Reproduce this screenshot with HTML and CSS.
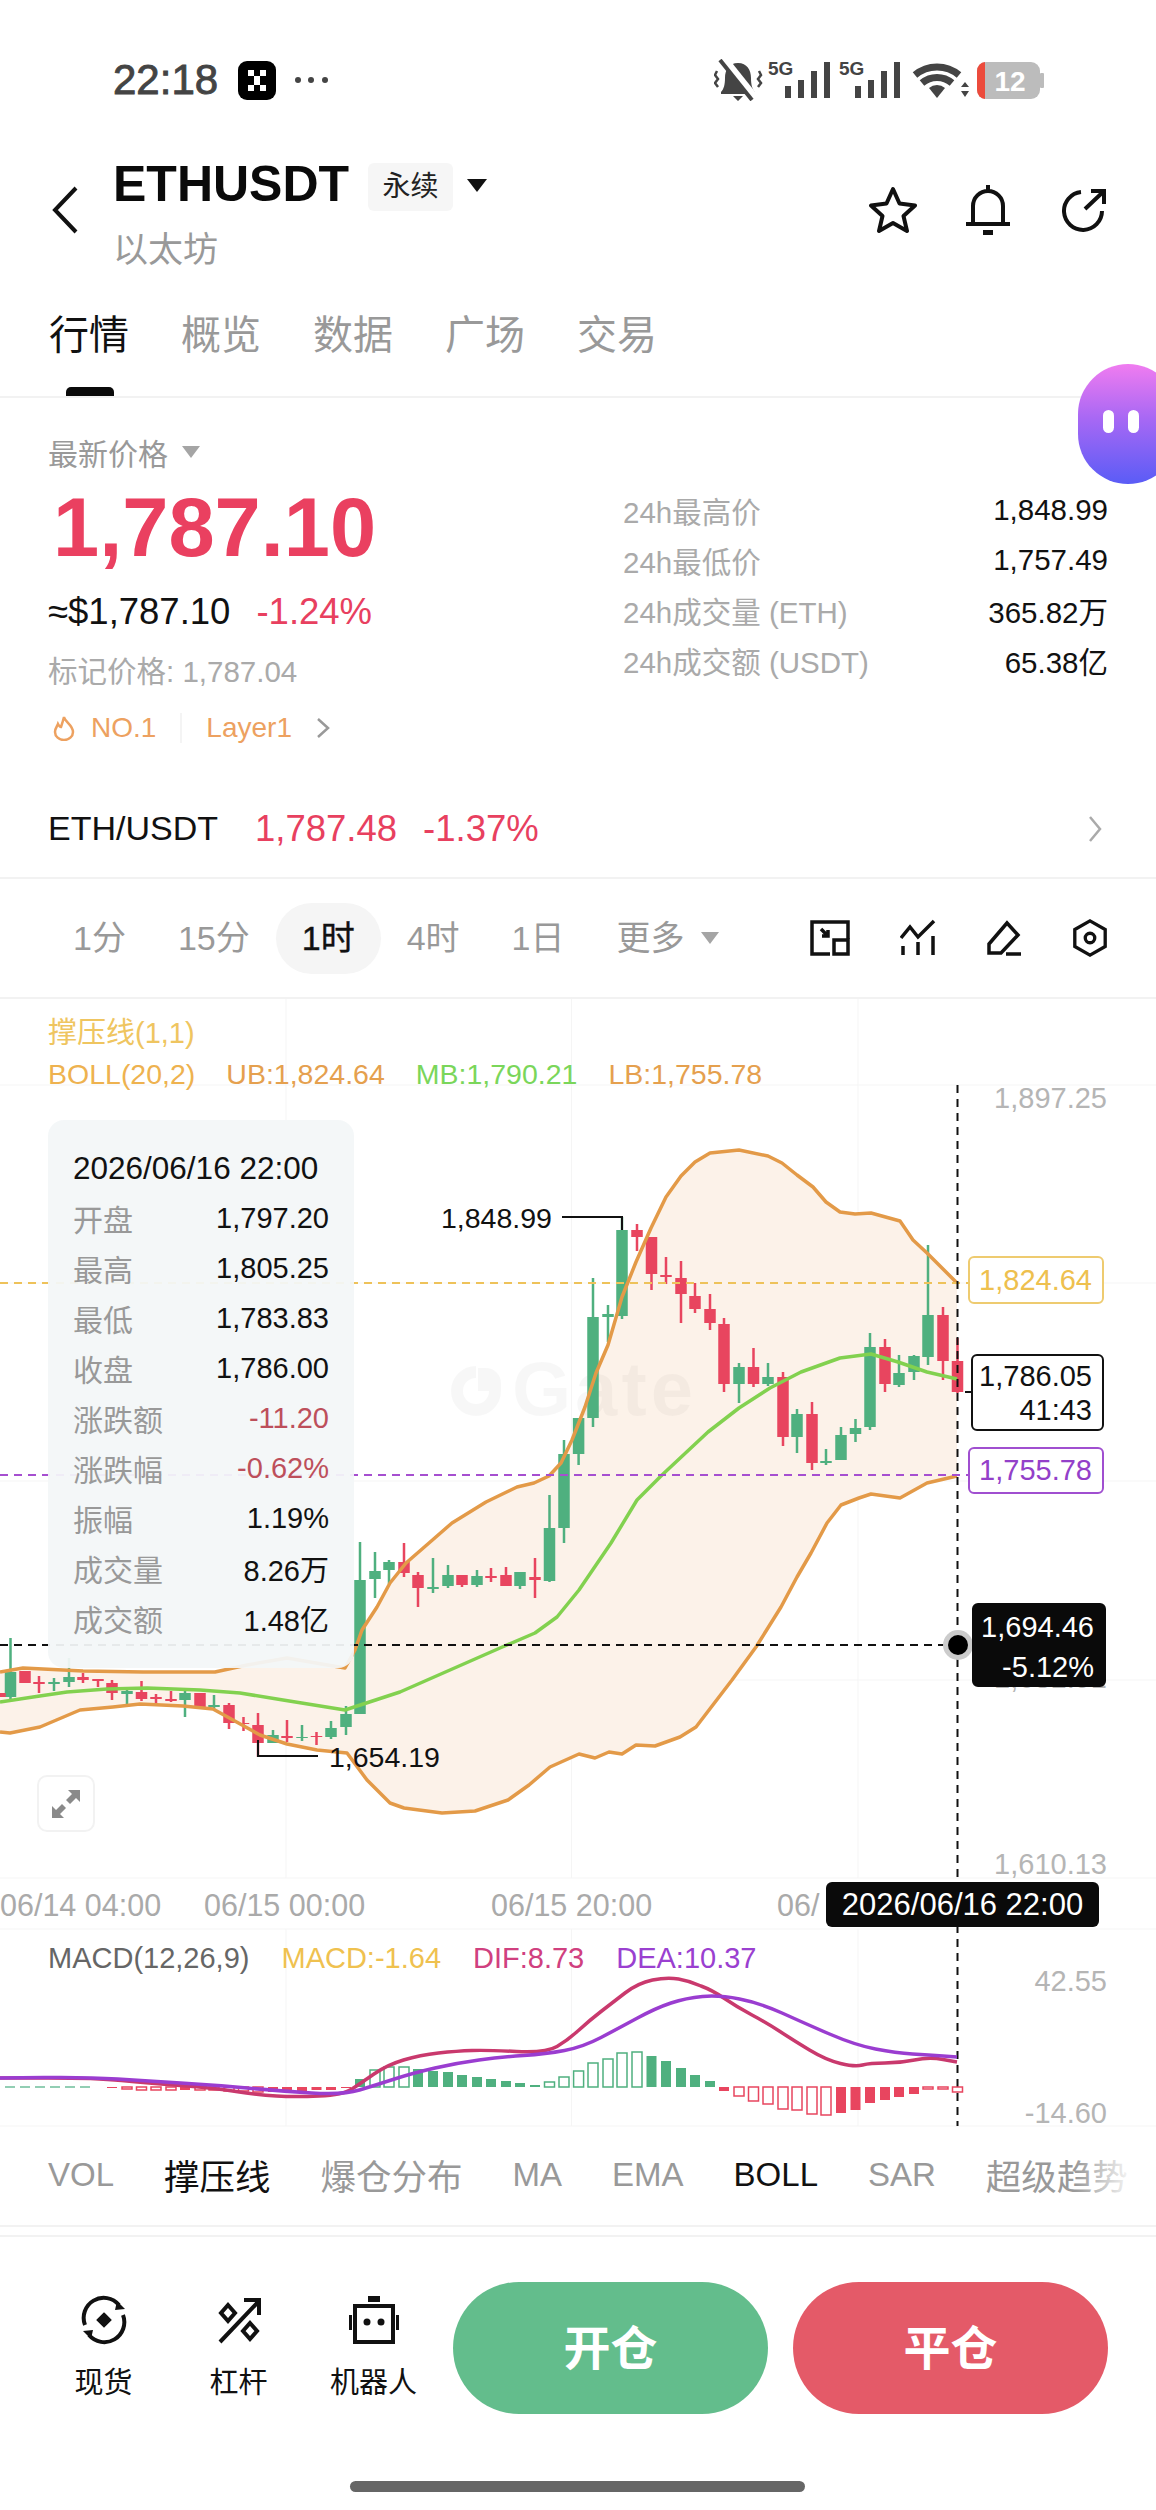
FILE: index.html
```html
<!DOCTYPE html>
<html lang="zh">
<head>
<meta charset="utf-8">
<title>ETHUSDT</title>
<link rel="stylesheet" href="styles.css">
</head>
<body>
<div class="page">

  <div class="status">
    <span class="clock">22:18</span>
    <svg class="app-icon" viewBox="0 0 38 39"><rect width="38" height="39" rx="9" fill="#000"/><path fill="#fff" d="M10 9h6v6h-6zM22 9h6v6h-6zM16 15h6v9h-6zM10 24h6v6h-6zM22 24h6v6h-6z"/></svg>
    <svg class="more-dots" viewBox="0 0 33 6"><circle cx="3" cy="3" r="3"/><circle cx="16" cy="3" r="3"/><circle cx="30" cy="3" r="3"/></svg>
    <svg class="status-right" viewBox="0 0 332 42">
      <path class="st-fill" d="M24 4c-9 0-13 7-13 15 0 6-1 11-4 14v2h34v-2c-3-3-4-8-4-14 0-8-4-15-13-15zM19 37h10l-5 5z"/>
      <path class="st-cut" d="M9 -1L41 39"/><path class="st-slash" d="M6 1L38 41"/>
      <path class="st-line" d="M3 12l-2 4 3 4-3 4 3 4M45 12l2 4-3 4 3 4-3 4"/>
      <text class="st-5g" x="54" y="16">5G</text>
      <path class="st-fill" d="M71 27h6v12h-6zM84 21h6v18h-6zM97 12h6v27h-6zM110 3h6v36h-6z"/>
      <text class="st-5g" x="125" y="16">5G</text>
      <path class="st-fill" d="M141 27h6v12h-6zM154 21h6v18h-6zM167 12h6v27h-6zM180 3h6v36h-6z"/>
      <path class="st-wifi" d="M201 16a34 34 0 0 1 44 0M208 24a23 23 0 0 1 30 0"/>
      <path class="st-fill" d="M215 29a12 12 0 0 1 16 0l-8 10z"/>
      <path class="st-fill" d="M247 28l4-5 4 5zM247 32l4 6 4-6z"/>
      <rect class="st-batt" x="263" y="3" width="63" height="37" rx="9"/>
      <rect class="st-batt" x="326" y="14" width="4" height="15" rx="1"/>
      <path class="st-red" d="M271 3a8 9 0 0 0-8 9v19a8 9 0 0 0 8 9z"/>
      <text class="st-batt-text" x="296" y="32">12</text>
    </svg>
  </div>

  <div class="hdr">
    <svg class="back" viewBox="0 0 26 48"><path d="M24 2L3 24l21 22"/></svg>
    <div class="hdr-main">
      <div class="title-row">
        <span class="symbol">ETHUSDT</span>
        <span class="badge">永续</span>
        <span class="tri tri-dark"></span>
      </div>
      <div class="sub">以太坊</div>
    </div>
    <div class="hdr-actions">
      <svg class="ic-star" viewBox="0 0 48 48"><path d="M24 3l6.500 14.500L46 19.500 34.500 30 38 45l-14-8-14 8 3.500-15L2 19.500l15.500-2z"/></svg>
      <svg class="ic-bell" viewBox="0 0 44 50"><path d="M22 0v6M7 38V21a15 15 0 0 1 30 0v17M0 39h44"/><rect x="17" y="45" width="10" height="5"/></svg>
      <svg class="ic-share" viewBox="0 0 44 44"><path d="M19 4A19 19 0 1 0 40 23M23 21L41 4M29 3h13v13"/></svg>
    </div>
  </div>

  <div class="tabs">
    <div class="tab-row">
      <span class="tab tab-on">行情</span>
      <span class="tab">概览</span>
      <span class="tab">数据</span>
      <span class="tab">广场</span>
      <span class="tab">交易</span>
    </div>
    <div class="tab-ink"></div>
  </div>

  <div class="price">
    <div class="price-left">
      <div class="latest"><span>最新价格</span><span class="tri tri-gray"></span></div>
      <div class="big">1,787.10</div>
      <div class="fiat"><span>≈$1,787.10</span><span class="down">-1.24%</span></div>
      <div class="mark">标记价格: 1,787.04</div>
      <div class="tags">
        <svg class="ic-fire" viewBox="0 0 22 26"><path d="M11 2c1 5 9 8 9 15a9 8 0 0 1-18 0c0-4 2-5 3-8 1 2 2 3 3 3 1-3 2-6 3-10z"/></svg>
        <span class="tag-no">NO.1</span>
        <span class="tag-sep"></span>
        <span>Layer1</span>
        <svg class="ic-chev" viewBox="0 0 14 20"><path d="M2 1l10 9-10 9"/></svg>
      </div>
    </div>
    <div class="stats">
      <div class="stat"><span>24h最高价</span><b>1,848.99</b></div>
      <div class="stat"><span>24h最低价</span><b>1,757.49</b></div>
      <div class="stat"><span>24h成交量 (ETH)</span><b>365.82万</b></div>
      <div class="stat"><span>24h成交额 (USDT)</span><b>65.38亿</b></div>
    </div>
  </div>

  <div class="pair">
    <span class="pair-name">ETH/USDT</span>
    <span class="down">1,787.48</span>
    <span class="down">-1.37%</span>
    <svg class="pair-chev" viewBox="0 0 14 28"><path d="M2 2l10 12-10 12"/></svg>
  </div>

  <div class="intervals">
    <span class="iv">1分</span>
    <span class="iv">15分</span>
    <span class="iv iv-on">1时</span>
    <span class="iv">4时</span>
    <span class="iv">1日</span>
    <span class="iv">更多</span>
    <span class="tri tri-gray tri-more"></span>
    <div class="iv-tools">
      <svg class="tool-a" viewBox="0 0 40 36"><path d="M20 34H2V2h36v17M11 9l7 7M18 10v6h-6"/><rect x="24" y="20" width="14" height="14"/></svg>
      <svg class="tool-b" viewBox="0 0 36 34"><path d="M1 17L10 6l8 10L34 0M3 25v9M18 21v13M33 15v19"/></svg>
      <svg class="tool-b" viewBox="0 0 36 36"><path d="M3 33v-9L21 3l11 12-17 18zM20 34h15"/></svg>
      <svg class="tool-b" viewBox="0 0 36 40"><path d="M18 2l16 9v18l-16 9-16-9V11z"/><circle cx="18" cy="20" r="5"/></svg>
    </div>
  </div>

  <div class="chart">
    <svg class="chart-svg" viewBox="0 999 1156 1128">
      <path class="grid" d="M0 1085H1156M0 1283H1156M0 1481H1156M0 1680H1156M0 1878H1156M0 1929H1156M0 2126H1156M286 999V1878M571.500 999V1878M858 999V1878M286 1929V2126M571.500 1929V2126M858 1929V2126"/>
      <path class="band-fill" d="M0 1672 23 1668 83 1671 143 1672 215 1672 247 1665 287 1658 345 1668 355 1650 362 1630 377 1607 390 1583 406 1563 429 1543 452 1523 486 1502 517 1487 534 1483 549 1476 561 1463 572 1440 585 1407 596 1373 608 1345 622 1297 636 1262 651 1228 666 1197 681 1176 695 1162 710 1153 739 1150 768 1156 782 1163 797 1175 813 1187 826 1202 840 1212 855 1214 871 1213 900 1221 913 1240 927 1253 957 1283 957 1476 927 1483 900 1498 871 1494 859 1498 841 1505 827 1523 811 1553 797 1577 781 1607 756 1647 732 1680 696 1727 680 1737 655 1746 636 1745 622 1754 609 1752 595 1758 579 1754 550 1767 529 1785 508 1800 475 1811 442 1813 404 1808 390 1803 367 1780 347 1753 317 1750 287 1744 260 1735 233 1720 213 1709 183 1706 140 1704 113 1707 80 1710 40 1727 10 1733 0 1732z"/>
      <g class="watermark">
        <path class="wm-ring" d="M476 1372a19 19 0 1 0 19 19"/>
        <path class="wm-dot" d="M478 1368h8a15 15 0 0 1 15 15v8h-23z"/>
        <text class="wm-text" x="512" y="1415">Gate</text>
      </g>
      <path class="wick-g" d="M928 1245V1365M914 1355V1380M899 1355V1387M870 1333V1430M855.500 1419V1442M841 1427V1460M826 1449V1465M797 1409V1453M768 1363V1386M739 1363V1403M622 1217V1319M608 1305V1342M593 1278V1427M578.600 1418V1465M564 1440V1543M549.500 1495V1582M520 1572V1589M477 1570V1587M448 1565V1588M433 1558V1593M389 1560V1584M375 1552V1598M360 1542V1714M346 1706V1735M331 1721V1739M302 1725V1741M273 1730V1743M214 1695V1709M185 1690V1717M127 1688V1704M69 1658V1687M54 1678V1691M10.500 1638V1700"/>
      <path class="body-g" d="M928 1315V1357M914 1356V1372M899 1373V1385M870 1347V1427M855.500 1428V1434M841 1435V1460M826 1461V1463M797 1414V1437M768 1377V1384M739 1367V1384M622 1230V1316M608 1314V1317M593 1317V1418M578.600 1418V1454M564 1454V1528M549.500 1528V1581M520 1572V1586M477 1576V1585M448 1575V1586M433 1587V1589M389 1562V1570M375 1571V1579M360 1580V1714M346 1714V1727M331 1728V1737M302 1737V1738M273 1735V1743M214 1705V1707M185 1693V1700M127 1691V1694M69 1677V1682M54 1682V1684M10.500 1672V1697"/>
      <path class="wick-r" d="M957.500 1338V1393M943 1307V1380M885 1339V1392M812 1402V1470M783 1372V1446M753.500 1348V1387M724 1318V1392M710 1294V1330M695 1283V1313M681 1261V1323M666 1257V1284M651.500 1237V1290M637 1224V1251M535 1558V1598M506 1567V1586M491 1568V1582M462 1575V1587M418 1572V1607M404 1543V1577M316.500 1732V1745M287 1720V1742M258 1713V1757M243.500 1717V1731M229 1703V1729M200 1693V1707M171 1691V1702M156 1694V1704M141.500 1681V1701M112 1680V1700M98 1679V1687M83 1673V1683M39 1676V1693M25 1671V1683"/>
      <path class="body-r" d="M957.500 1361V1392M943 1315V1361M885 1347V1384M812 1414V1463M783 1377V1437M753.500 1367V1384M724 1324V1384M710 1309V1323M695 1296V1309M681 1278V1294M666 1275V1277M651.500 1237V1274M637 1230V1237M535 1577V1580M506 1575V1586M491 1576V1578M462 1575V1585M418 1575V1588M404 1562V1573M316.500 1736V1737M287 1736V1738M258 1725V1743M243.500 1723V1724M229 1705V1723M200 1693V1707M171 1699V1701M156 1697V1699M141.500 1692V1699M112 1683V1693M98 1679V1681M83 1677V1680M39 1682V1684M25 1671V1683M0 1693V1697"/>
      <path class="boll-o" d="M0 1672 23 1668 83 1671 143 1672 215 1672 247 1665 287 1658 345 1668 355 1650 362 1630 377 1607 390 1583 406 1563 429 1543 452 1523 486 1502 517 1487 534 1483 549 1476 561 1463 572 1440 585 1407 596 1373 608 1345 622 1297 636 1262 651 1228 666 1197 681 1176 695 1162 710 1153 739 1150 768 1156 782 1163 797 1175 813 1187 826 1202 840 1212 855 1214 871 1213 900 1221 913 1240 927 1253 957 1283"/>
      <path class="boll-o" d="M0 1732 10 1733 40 1727 80 1710 113 1707 140 1704 183 1706 213 1709 233 1720 260 1735 287 1744 317 1750 347 1753 367 1780 390 1803 404 1808 442 1813 475 1811 508 1800 529 1785 550 1767 579 1754 595 1758 609 1752 622 1754 636 1745 655 1746 680 1737 696 1727 732 1680 756 1647 781 1607 797 1577 811 1553 827 1523 841 1505 859 1498 871 1494 900 1498 927 1483 957 1476"/>
      <path class="boll-g" d="M0 1702 33 1697 67 1692 107 1689 147 1688 200 1690 240 1693 283 1700 345 1710 400 1692 450 1670 500 1648 535 1633 557 1617 579 1590 611 1543 637 1500 662 1475 708 1432 739 1408 770 1388 801 1372 840 1358 871 1354 898 1362 927 1372 957 1379"/>
      <path class="dash-y" d="M0 1283H968"/>
      <path class="dash-p" d="M0 1475H968"/>
      <path class="dash-k" d="M0 1645H957M957.500 1085V2126"/>
      <path class="lead" d="M562 1217H622V1230M258 1740V1756H318M965 1392H972"/>
      <text class="ax" x="1107" y="1108">1,897.25</text>
      <text class="ax" x="1107" y="1688">1,681.91</text>
      <text class="ax" x="1107" y="1874">1,610.13</text>
      <text class="note" x="441" y="1228">1,848.99</text>
      <text class="note" x="329" y="1767">1,654.19</text>
      <text class="ax-date" x="0" y="1916">06/14 04:00</text>
      <text class="ax-date" x="204" y="1916">06/15 00:00</text>
      <text class="ax-date" x="491" y="1916">06/15 20:00</text>
      <text class="ax-date" x="777" y="1916">06/</text>
      <text class="ax" x="1107" y="1991">42.55</text>
      <text class="ax" x="1107" y="2123">-14.60</text>
      <path class="hist-rf" d="M914 2087v7M899 2087v10M885 2087v13M870 2087v16M855.500 2087v23M841 2087v26M724 2087v4M346 2087v1M331 2087v3M316.500 2087v3M302 2087v4M287 2087v3M273 2087v5M185 2087v3M112 2087v1"/>
      <path class="hist-gf" d="M710 2087v-6M695 2087v-12M681 2087v-19M666 2087v-26M651.500 2087v-31M535 2087v-2M520 2087v-4M506 2087v-6M491 2087v-8M477 2087v-10M462 2087v-12M448 2087v-15M433 2087v-16M418 2087v-18M360 2087v-8"/>
      <path class="hist-rh" d="M952.500 2087h10v5h-10zM938 2087h10v2h-10zM923 2087h10v2h-10zM821 2087h10v28h-10zM807 2087h10v27h-10zM792 2087h10v23h-10zM778 2087h10v22h-10zM763 2087h10v17h-10zM748.500 2087h10v14h-10zM734 2087h10v9h-10zM253 2087h10v5h-10zM238.500 2087h10v4h-10zM224 2087h10v4h-10zM209 2087h10v3h-10zM195 2087h10v3h-10zM166 2087h10v3h-10zM151 2087h10v3h-10zM136.500 2087h10v3h-10zM122 2087h10v2h-10z"/>
      <path class="hist-gh" d="M632 2087h10v-35h-10zM617 2087h10v-34h-10zM603 2087h10v-28h-10zM588 2087h10v-24h-10zM573.600 2087h10v-16h-10zM559 2087h10v-10h-10zM544.500 2087h10v-5h-10zM399 2087h10v-20h-10zM384 2087h10v-20h-10zM370 2087h10v-17h-10z"/>
      <path class="hist-dash" d="M5 2087H90"/>
      <path class="macd-dif" d="M0 2078L48 2078Q96 2078 121.500 2080.500Q147 2083 180.500 2085.500Q214 2088 236 2091.500Q258 2095 276.500 2096Q295 2097 319 2096Q343 2095 352 2089Q361 2083 374 2074Q387 2065 403.500 2060Q420 2055 438.500 2053Q457 2051 472 2050.500Q487 2050 516.500 2051.500Q546 2053 557 2046.500Q568 2040 579 2030Q590 2020 601 2011.500Q612 2003 625 1993Q638 1983 652.500 1980Q667 1977 678.500 1979Q690 1981 701 1986Q712 1990 724.500 1998.500Q737 2007 752 2015Q767 2023 780 2031.500Q793 2040 809.500 2050Q826 2060 840.500 2063.500Q855 2067 862.500 2065Q870 2063 885 2063Q900 2063 914.500 2060Q929 2057 943 2059.500L957 2062"/>
      <path class="macd-dea" d="M0 2078L44 2077.500Q88 2077 117.500 2079Q147 2081 180.500 2083Q214 2085 247 2088Q280 2091 311.500 2093Q343 2095 359.500 2090Q376 2085 394.500 2079Q413 2073 435 2068Q457 2063 479 2060Q501 2057 523.500 2055.500Q546 2054 564.500 2050.500Q583 2047 601 2037.500Q619 2028 637.500 2018Q656 2008 671 2003Q686 1998 702.500 1996.500Q719 1995 739.500 1999Q760 2003 782 2013Q804 2023 829.500 2034Q855 2045 875.500 2049Q896 2053 912.500 2054Q929 2055 943 2056L957 2057"/>
      <circle class="cross-halo" cx="958" cy="1645" r="15"/>
      <circle cx="958" cy="1645" r="10"/>
    </svg>

    <div class="legend">
      <div class="legend-top">撑压线(1,1)</div>
      <div class="legend-row">
        <span class="c-boll">BOLL(20,2)</span>
        <span class="c-ub">UB:1,824.64</span>
        <span class="c-mb">MB:1,790.21</span>
        <span class="c-ub">LB:1,755.78</span>
      </div>
    </div>

    <div class="macd-legend">
      <span class="c-macd">MACD(12,26,9)</span>
      <span class="c-yellow">MACD:-1.64</span>
      <span class="c-dif">DIF:8.73</span>
      <span class="c-dea">DEA:10.37</span>
    </div>

    <div class="ohlc">
      <div class="ohlc-row ohlc-date">2026/06/16 22:00</div>
      <div class="ohlc-row"><span>开盘</span><b>1,797.20</b></div>
      <div class="ohlc-row"><span>最高</span><b>1,805.25</b></div>
      <div class="ohlc-row"><span>最低</span><b>1,783.83</b></div>
      <div class="ohlc-row"><span>收盘</span><b>1,786.00</b></div>
      <div class="ohlc-row"><span>涨跌额</span><b class="ohlc-down">-11.20</b></div>
      <div class="ohlc-row"><span>涨跌幅</span><b class="ohlc-down">-0.62%</b></div>
      <div class="ohlc-row"><span>振幅</span><b>1.19%</b></div>
      <div class="ohlc-row"><span>成交量</span><b>8.26万</b></div>
      <div class="ohlc-row"><span>成交额</span><b>1.48亿</b></div>
    </div>

    <div class="expand">
      <svg viewBox="0 0 28 28"><path d="M28 0v12l-4-4-6 6-4-4 6-6-4-4zM0 28V16l4 4 6-6 4 4-6 6 4 4z"/></svg>
    </div>

    <div class="tag tag-ub">1,824.64</div>
    <div class="tag tag-now">1,786.05<br>41:43</div>
    <div class="tag tag-lb">1,755.78</div>
    <div class="tag tag-cross">1,694.46<br>-5.12%</div>
    <div class="tag-date">2026/06/16 22:00</div>
  </div>

  <div class="indicators">
    <span>VOL</span>
    <span class="ind-cjk ind-on">撑压线</span>
    <span class="ind-cjk">爆仓分布</span>
    <span>MA</span>
    <span>EMA</span>
    <span class="ind-on">BOLL</span>
    <span>SAR</span>
    <span class="ind-cjk">超级趋势</span>
    <div class="ind-fade"></div>
  </div>

  <div class="footer">
    <div class="foot-row">
      <div class="tools">
        <div class="tool">
          <svg viewBox="0 0 50 50"><path d="M6 30A20 20 0 0 1 40 10M44 20A20 20 0 0 1 10 40M25 20l5 5-5 5-5-5z"/><path class="tool-solid" d="M38 6l8 8-10 1zM12 44l-8-8 10-1zM25 20l5 5-5 5-5-5z"/></svg>
          <span>现货</span>
        </div>
        <div class="tool">
          <svg viewBox="0 0 50 50"><path d="M6 47L45 6M30 5h15v15M14 10l7 8-7 8-7-8zM36 28l7 8-7 8-7-8z"/></svg>
          <span>杠杆</span>
        </div>
        <div class="tool">
          <svg viewBox="0 0 50 50"><rect x="6" y="11" width="38" height="36"/><path class="tool-solid" d="M19 1h12v6H19zM0 20h3v15H0zM47 20h3v15h-3z"/><circle class="tool-solid" cx="18" cy="27" r="3.500"/><circle class="tool-solid" cx="32" cy="27" r="3.500"/></svg>
          <span>机器人</span>
        </div>
      </div>
      <button class="btn btn-open">开仓</button>
      <button class="btn btn-close">平仓</button>
    </div>
    <div class="home"></div>
  </div>

  <div class="bubble"><i></i><i></i></div>
</div>
</body>
</html>
```

FILE: styles.css
```css
* { box-sizing: border-box; }
html, body { margin: 0; padding: 0; background: #fff; }
body { font-family: "Liberation Sans", "Noto Sans CJK SC", sans-serif; color: #111; }
svg { display: block; }
.page { position: relative; width: 1156px; height: 2510px; overflow: hidden; background: #fff; }

/* status bar */
.status { height: 160px; padding-left: 113px; display: flex; align-items: center; }
.clock { font-size: 42px; color: #444; -webkit-text-stroke: .9px #444; }
.app-icon { width: 38px; height: 39px; margin-left: 20px; }
.more-dots { width: 33px; height: 6px; margin-left: 19px; fill: #444; }
.status-right { width: 332px; height: 42px; margin-left: auto; margin-right: 110px; }
.st-fill { fill: #444; }
.st-cut { stroke: #fff; stroke-width: 8; }
.st-slash { stroke: #444; stroke-width: 4; }
.st-line { stroke: #444; stroke-width: 2.5; fill: none; }
.st-wifi { stroke: #444; stroke-width: 7; fill: none; }
.st-5g { font-size: 19px; font-weight: 700; fill: #444; }
.st-batt { fill: #bcbcbc; }
.st-red { fill: #ec4b3c; }
.st-batt-text { font-size: 28px; font-weight: 700; fill: #fff; text-anchor: middle; }

/* header */
.hdr { height: 100px; padding: 0 50px 0 52px; display: flex; align-items: center; }
.back { width: 26px; height: 48px; fill: none; stroke: #111; stroke-width: 4; }
.hdr-main { align-self: flex-start; height: 108px; margin-left: 35px; }
.title-row { height: 50px; display: flex; align-items: center; }
.symbol { font-size: 50px; font-weight: 700; color: #0a0a0a; line-height: 50px; margin-top: -3px; }
.badge { width: 85px; height: 48px; margin-left: 19px; margin-top: 4px; background: #f6f6f6; border-radius: 6px; font-size: 28px; line-height: 48px; text-align: center; color: #222; }
.tri { display: inline-block; width: 0; height: 0; border-style: solid; border-color: transparent; border-width: 13px 10px 0; }
.tri-dark { border-top-color: #111; margin-left: 14px; }
.tri-gray { border-top-color: #a5a5a5; border-width: 12px 9px 0; }
.sub { margin-top: 22px; font-size: 35px; line-height: 36px; color: #999; }
.hdr-actions { margin-left: auto; display: flex; align-items: center; gap: 50px; }
.ic-star { width: 48px; height: 48px; fill: none; stroke: #111; stroke-width: 4; stroke-linejoin: round; }
.ic-bell { width: 44px; height: 50px; margin-left: -1px; fill: none; stroke: #111; stroke-width: 4; }
.ic-bell rect { fill: #111; stroke: none; }
.ic-share { width: 44px; height: 44px; margin-left: 2px; fill: none; stroke: #111; stroke-width: 4; }

/* tabs */
.tabs { height: 138px; padding-top: 53px; border-bottom: 2px solid #f2f2f2; }
.tab-row { display: flex; padding-left: 49px; gap: 52px; height: 44px; }
.tab { font-size: 40px; line-height: 44px; color: #999; }
.tab-on { color: #111; }
.tab-ink { width: 48px; height: 9px; margin: 30px 0 0 66px; background: #0a0a0a; border-radius: 5px 5px 0 0; }

/* price */
.price { height: 382px; padding: 0 48px; display: flex; justify-content: space-between; }
.price-left { padding-top: 35px; width: 500px; }
.latest { height: 38px; display: flex; align-items: center; gap: 14px; font-size: 30px; color: #999; }
.big { height: 84px; margin-top: 15px; padding-left: 5px; font-size: 83px; line-height: 84px; font-weight: 700; color: #ea4060; }
.fiat { height: 38px; margin-top: 23px; display: flex; align-items: center; gap: 26px; font-size: 36.5px; color: #111; }
.down { color: #e8405f; }
.mark { height: 38px; margin-top: 22px; font-size: 29.5px; line-height: 38px; color: #aaa; }
.tags { height: 38px; margin-top: 18px; display: flex; align-items: center; font-size: 28px; color: #eda160; }
.ic-fire { width: 22px; height: 26px; margin-left: 5px; fill: none; stroke: #eda160; stroke-width: 2.5; }
.tag-no { margin-left: 16px; }
.tag-sep { width: 2px; height: 30px; margin: 0 24px; background: #f4f4f4; }
.ic-chev { width: 14px; height: 20px; margin-left: 24px; fill: none; stroke: #999; stroke-width: 2.5; }
.stats { width: 485px; padding-top: 87px; }
.stat { height: 50px; display: flex; align-items: center; justify-content: space-between; font-size: 29.5px; color: #aaa; }
.stat b { font-weight: 400; color: #111; }

/* pair row */
.pair { height: 99px; padding: 0 54px 0 48px; border-bottom: 2px solid #f2f2f2; display: flex; align-items: center; gap: 26px; font-size: 36.5px; }
.pair-name { font-size: 34px; margin-right: 11px; }
.pair-chev { width: 14px; height: 28px; margin-left: auto; fill: none; stroke: #aaa; stroke-width: 2.5; }

/* intervals */
.intervals { height: 120px; padding: 0 48px 0 47px; border-bottom: 2px solid #f2f2f2; display: flex; align-items: center; }
.iv { height: 71px; padding: 0 26px; border-radius: 36px; font-size: 34px; line-height: 71px; color: #999; }
.iv-on { background: #f5f5f5; color: #111; -webkit-text-stroke: .4px #111; }
.tri-more { margin-left: -10px; }
.iv-tools { margin-left: auto; display: flex; align-items: center; gap: 50px; }
.iv-tools svg { fill: none; stroke: #111; stroke-width: 3.5; }
.tool-a { width: 40px; height: 36px; }
.tool-b { width: 36px; height: 38px; }

/* chart */
.chart { position: relative; height: 1128px; }
.chart-svg { position: absolute; left: 0; top: 0; width: 1156px; height: 1128px; overflow: visible; }
.chart-svg path { fill: none; }
.grid { stroke: #f5f5f5; stroke-width: 1; }
.chart-svg .band-fill { fill: #fcf2e9; }
.chart-svg .wm-ring { stroke: rgba(0, 0, 0, .03); stroke-width: 12; }
.chart-svg .wm-dot { fill: rgba(0, 0, 0, .03); }
.wm-text { font-size: 76px; font-weight: 700; letter-spacing: 4px; fill: rgba(0, 0, 0, .03); }
.wick-g { stroke: #4fb07f; stroke-width: 2.500; }
.body-g { stroke: #4fb07f; stroke-width: 11.500; }
.wick-r { stroke: #e8455f; stroke-width: 2.500; }
.body-r { stroke: #e8455f; stroke-width: 11.500; }
.boll-o { stroke: #e39a48; stroke-width: 3.5; stroke-linejoin: round; }
.boll-g { stroke: #82d14f; stroke-width: 3.5; stroke-linejoin: round; }
.dash-y { stroke: #eec25a; stroke-width: 2; stroke-dasharray: 8 6; }
.dash-p { stroke: #a64fd0; stroke-width: 2; stroke-dasharray: 8 6; }
.dash-k { stroke: #111; stroke-width: 2; stroke-dasharray: 8 6; }
.lead { stroke: #111; stroke-width: 2; }
.ax { font-size: 29px; fill: #b5b5b5; text-anchor: end; }
.ax-date { font-size: 30.5px; fill: #aaa; }
.note { font-size: 28.5px; fill: #111; }
.hist-rf { stroke: #e8455f; stroke-width: 10; }
.hist-gf { stroke: #4fb07f; stroke-width: 10; }
.hist-rh { stroke: #e8455f; stroke-width: 1.500; }
.hist-gh { stroke: #4fb07f; stroke-width: 1.500; }
.hist-dash { stroke: #6fbf9a; stroke-width: 1.500; stroke-dasharray: 10 5; }
.macd-dif { stroke: #c9396d; stroke-width: 3.5; stroke-linejoin: round; }
.macd-dea { stroke: #9a3dd0; stroke-width: 3.5; stroke-linejoin: round; }
.cross-halo { fill: #ccc; }

.legend { position: absolute; left: 48px; top: 15px; font-size: 28.5px; }
.legend-top { height: 38px; line-height: 38px; font-size: 29px; color: #efc560; }
.legend-row { height: 40px; margin-top: 2px; display: flex; align-items: center; gap: 31px; }
.c-boll { color: #eeb24f; }
.c-ub { color: #e5a04e; }
.c-mb { color: #7ad65a; }
.macd-legend { position: absolute; left: 48px; top: 939px; height: 40px; display: flex; align-items: center; gap: 32px; font-size: 29px; }
.c-macd { color: #666; }
.c-yellow { color: #efc14f; }
.c-dif { color: #d0407f; }
.c-dea { color: #9a40d0; }

.ohlc { position: absolute; left: 48px; top: 121px; width: 306px; height: 548px; padding: 23px 25px 0; background: rgba(243, 246, 248, .94); border-radius: 16px; font-size: 29px; }
.ohlc-row { height: 50px; display: flex; align-items: center; justify-content: space-between; color: #999; }
.ohlc-row span { font-size: 30px; }
.ohlc-row b { font-weight: 400; color: #111; }
.ohlc-date { color: #111; font-size: 31.5px; }
.ohlc-row .ohlc-down { color: #bd4f5b; }

.expand { position: absolute; left: 37px; top: 776px; width: 58px; height: 57px; border: 2px solid #f2f2f2; border-radius: 10px; display: flex; align-items: center; justify-content: center; background: #fff; }
.expand svg { width: 28px; height: 28px; fill: #8a8a8a; }

.tag { position: absolute; right: 52px; width: 136px; padding-right: 10px; border: 2px solid #111; border-radius: 6px; background: #fff; text-align: right; font-size: 29px; }
.tag-ub { top: 257px; height: 48px; line-height: 44px; border-color: #eecb70; color: #eec04e; }
.tag-lb { top: 448px; height: 47px; line-height: 43px; border-color: #a04fd0; color: #9340c9; }
.tag-now { top: 355px; width: 133px; height: 77px; line-height: 34px; padding-top: 3px; color: #111; }
.tag-cross { top: 604px; right: 50px; width: 134px; height: 84px; line-height: 40px; padding-top: 2px; background: #0a0a0a; border-color: #0a0a0a; color: #fff; }
.tag-date { position: absolute; left: 826px; top: 883px; width: 273px; height: 45px; border-radius: 6px; background: #0a0a0a; color: #fff; font-size: 31px; line-height: 45px; text-align: center; }

/* indicators */
.indicators { position: relative; height: 100px; padding: 0 0 3px 48px; border-bottom: 2px solid #f2f2f2; display: flex; align-items: center; gap: 50px; font-size: 33px; color: #999; white-space: nowrap; }
.indicators .ind-cjk { font-size: 35.5px; }
.indicators .ind-on { color: #111; }
.ind-fade { position: absolute; left: 1075px; top: 0; width: 60px; height: 96px; background: linear-gradient(to right, rgba(255,255,255,0), #fff); }

/* footer */
.footer { margin-top: 8px; height: 275px; border-top: 2px solid #f2f2f2; padding-top: 45px; }
.foot-row { height: 132px; padding-left: 36px; display: flex; align-items: stretch; }
.tools { display: flex; width: 405px; margin-right: 12px; }
.tool { width: 135px; padding-top: 13px; display: flex; flex-direction: column; align-items: center; font-size: 29px; line-height: 36px; color: #111; }
.tool svg { width: 50px; height: 50px; margin-bottom: 20px; fill: none; stroke: #111; stroke-width: 4; }
.tool svg .tool-solid { fill: #111; stroke: none; }
.btn { width: 315px; height: 132px; padding: 0 0 7px; border: 0; border-radius: 66px; color: #fff; font-family: inherit; font-size: 47px; font-weight: 700; }
.btn-open { background: #63bd8c; margin-right: 25px; }
.btn-close { background: #e45a68; }
.home { width: 455px; height: 11px; margin: 67px 0 0 350px; border-radius: 6px; background: #666; }

/* floating bubble */
.bubble { position: absolute; left: 1078px; top: 364px; width: 100px; height: 120px; border-radius: 50px; background: linear-gradient(#f07cf0, #a868f4 45%, #5a5cf6); display: flex; gap: 14px; padding: 46px 0 0 25px; }
.bubble i { display: block; width: 11px; height: 23px; border-radius: 6px; background: #fff; }
```
